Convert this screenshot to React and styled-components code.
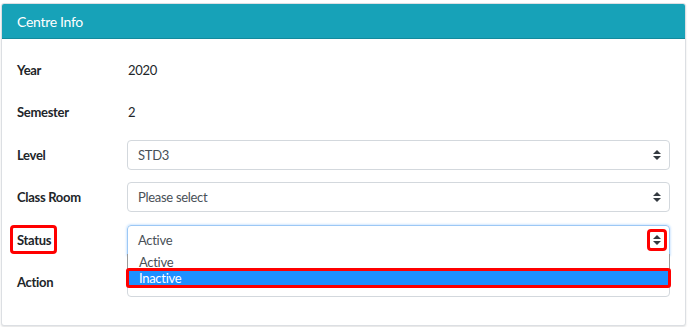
import React from 'react';
import styled, { createGlobalStyle } from 'styled-components';

const GlobalStyle = createGlobalStyle`
  body {
    margin: 0;
    background: #ffffff;
    font-family: Lato, "Open Sans", sans-serif;
    color: #212529;
    letter-spacing: -0.3px;
  }
`;

const Page = styled.div`
  padding: 3px 4px 1px 1px;
  width: 690px;
  height: 327px;
  box-sizing: border-box;
`;

const Card = styled.div`
  border: 1px solid #dcdfe3;
  border-radius: 3px;
  box-shadow: 0 1px 2px rgba(0,0,0,0.12);
  background: white;
`;

const Header = styled.div`
  height: 34px;
  background: #17a2b8;
  border-bottom: 1px solid #138a9c;
  color: white;
  font-size: 14px;
  display: flex;
  align-items: center;
  padding-left: 15px;
  border-radius: 2px 2px 0 0;
`;

const Body = styled.div`
  padding: 16px 15px 28px 15px;
  display: flex;
  flex-direction: column;
  gap: 12.4px;
`;

const Row = styled.div`
  position: relative;
  z-index: ${p => p.raised ? 2 : 'auto'};
  display: grid;
  grid-template-columns: 110px 1fr;
  align-items: center;
  height: 30px;
`;

const Label = styled.div`
  font-size: 13px;
  font-weight: 700;
  color: #212529;
`;

const Marked = styled.span`
  position: relative;
  &::after {
    content: '';
    position: absolute;
    left: -7px;
    right: -6px;
    top: -7px;
    bottom: -6px;
    border: 3px solid #ff0000;
    border-radius: 4px;
  }
`;

const Value = styled.div`
  font-size: 13px;
  color: #212529;
  padding-left: 1px;
`;

const Select = styled.div`
  position: relative;
  height: 30px;
  box-sizing: border-box;
  border: 1px solid ${p => p.focused ? '#9cc8f5' : '#d3d8dd'};
  border-radius: ${p => p.focused ? '4px 4px 0 0' : '4px'};
  box-shadow: ${p => p.focused ? '0 0 2px 1px rgba(128,189,255,0.35)' : 'none'};
  display: flex;
  align-items: center;
  justify-content: space-between;
  padding: 0 2px 0 10px;
  font-size: 13px;
  color: #495057;
`;

const ArrowBox = styled.span`
  width: 20px;
  height: 22px;
  box-sizing: border-box;
  display: flex;
  align-items: center;
  justify-content: center;
  border: 3px solid ${p => p.marked ? '#ff0000' : 'transparent'};
  border-radius: 4px;
`;

const List = styled.div`
  position: absolute;
  top: 100%;
  left: -1px;
  right: -1px;
  background: white;
  border: 1px solid #9a9a9a;
  border-top: none;
  z-index: 5;
`;

const Option = styled.div`
  position: relative;
  height: 16px;
  line-height: 16px;
  padding-left: 11px;
  font-size: 13px;
  color: ${p => p.active ? '#ffffff' : '#495057'};
  background: ${p => p.active ? '#1e90ff' : 'white'};
  ${p => p.marked && `
    &::after {
      content: '';
      position: absolute;
      left: -2px;
      right: -2px;
      top: -2px;
      bottom: -2px;
      border: 3px solid #ff0000;
      border-radius: 3px;
    }
  `}
`;

function Arrow() {
  return (
    <svg width="8" height="10" viewBox="0 0 4 5">
      <path d="M2 0L0 2h4zm0 5L0 3h4z" fill="#343a40" />
    </svg>
  );
}

export default function App() {
  return (
    <Page>
      <GlobalStyle />
      <Card>
        <Header>Centre Info</Header>
        <Body>
          <Row>
            <Label>Year</Label>
            <Value>2020</Value>
          </Row>
          <Row>
            <Label>Semester</Label>
            <Value>2</Value>
          </Row>
          <Row>
            <Label>Level</Label>
            <Select>
              STD3
              <ArrowBox><Arrow /></ArrowBox>
            </Select>
          </Row>
          <Row>
            <Label>Class Room</Label>
            <Select>
              Please select
              <ArrowBox><Arrow /></ArrowBox>
            </Select>
          </Row>
          <Row raised>
            <Label><Marked>Status</Marked></Label>
            <Select focused>
              Active
              <ArrowBox marked><Arrow /></ArrowBox>
              <List>
                <Option>Active</Option>
                <Option active marked>Inactive</Option>
              </List>
            </Select>
          </Row>
          <Row>
            <Label>Action</Label>
            <Select />
          </Row>
        </Body>
      </Card>
    </Page>
  );
}
